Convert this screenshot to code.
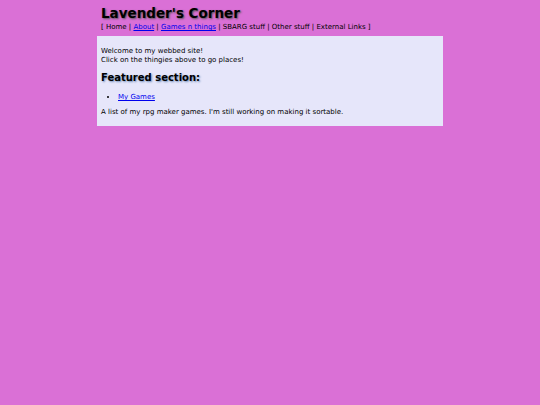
export default function App() {
  return (
    <div className="min-h-[405px] bg-[#da70d6] font-['DejaVu_Sans',sans-serif] text-black">
      <div className="w-[346px] mx-auto">
        <div className="px-[4px] pt-[5px] pb-[3px]">
          <h1 className="text-[13.5px] leading-[16px] font-bold [text-shadow:1px_1px_2px_#555]">Lavender's Corner</h1>
          <p className="text-[7px] leading-[12px]">
            [ Home | <a href="#" className="text-[#0000ee] underline">About</a> |{" "}
            <a href="#" className="text-[#0000ee] underline">Games n things</a> | SBARG stuff | Other stuff | External Links ]
          </p>
        </div>
        <div className="bg-[#e6e6fa] px-[4px] pt-[11px] pb-[9px] text-[7px] leading-[9px]">
          <p>Welcome to my webbed site!<br />Click on the thingies above to go places!</p>
          <h2 className="mt-[6px] text-[10px] leading-[13px] font-bold [text-shadow:1px_1px_2px_#6a8ab8]">Featured section:</h2>
          <ul className="list-disc pl-[17px] mt-[9px]">
            <li><a href="#" className="text-[#0000ee] underline">My Games</a></li>
          </ul>
          <p className="mt-[6px]">A list of my rpg maker games. I'm still working on making it sortable.</p>
        </div>
      </div>
    </div>
  );
}
